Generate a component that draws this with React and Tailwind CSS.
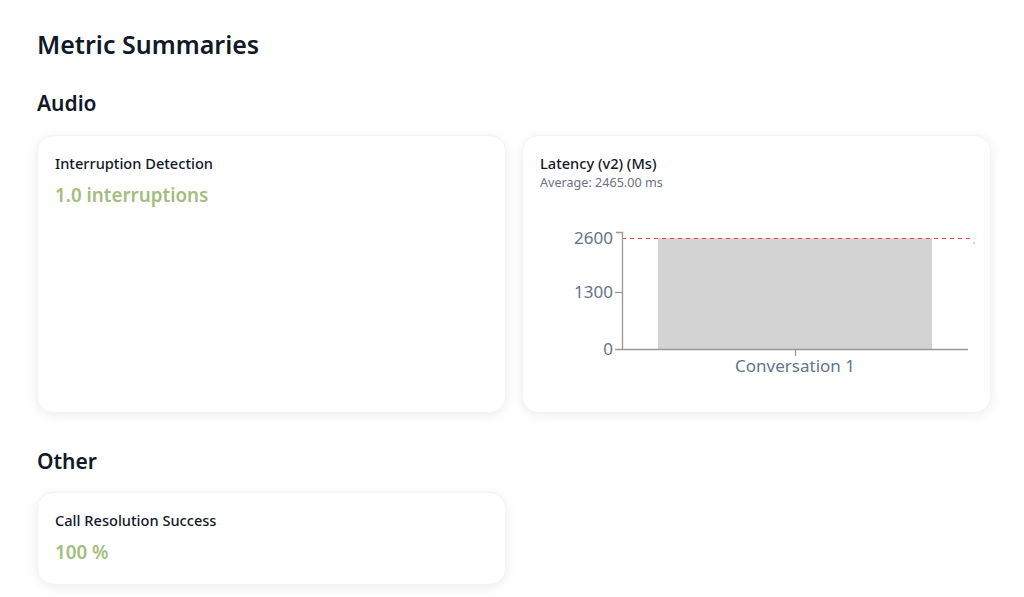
import React from 'react';

const font = { fontFamily: '"Noto Sans", "Open Sans", sans-serif' };

const Card = ({ className = '', children }) => (
    <div className={`rounded-2xl border border-gray-100 bg-white p-[17px] shadow-[0_2px_12px_rgba(0,0,0,0.08)] ${className}`}>
        {children}
    </div>
);

const LatencyChart = () => (
    <svg width="435" height="170" viewBox="0 0 435 170" className="block">
        {/* bar */}
        <rect x="118" y="19" width="274" height="111" fill="#d3d3d3" />
        {/* threshold line */}
        <line x1="82" y1="19.5" x2="431" y2="19.5" stroke="#ef4444" strokeWidth="1.2" strokeDasharray="4 4" />
        <rect x="433" y="23" width="2" height="2" fill="#f5d0a9" />
        {/* y axis */}
        <path d="M76,13.5H82.5V130.5" fill="none" stroke="#999" strokeWidth="1.3" />
        <line x1="75" y1="73.5" x2="82" y2="73.5" stroke="#999" strokeWidth="1.3" />
        <line x1="75" y1="130.5" x2="428" y2="130.5" stroke="#999" strokeWidth="1.5" />
        <line x1="255.5" y1="130" x2="255.5" y2="137" stroke="#999" strokeWidth="1.3" />
        <g fill="#64748b" fontSize="17" style={font} textAnchor="end">
            <text x="73" y="25">2600</text>
            <text x="73" y="79">1300</text>
            <text x="73" y="136">0</text>
        </g>
        <text x="255" y="153" fill="#64748b" fontSize="17" style={font} textAnchor="middle">Conversation 1</text>
    </svg>
);

export default function App() {
    return (
        <div style={font} className="min-h-screen bg-white pl-[37px] pr-[33px] pt-[28px] text-gray-900">
            <h1 className="text-[25px] font-semibold leading-8 text-[#111827]">Metric Summaries</h1>

            <h2 className="mt-[29px] text-[21px] font-semibold leading-7 text-[#111827]">Audio</h2>
            <div className="mt-[18px] grid grid-cols-2 gap-4">
                <Card className="h-[278px]">
                    <div className="text-[14.6px] font-medium leading-5 text-[#111827]">Interruption Detection</div>
                    <div className="mt-[8px] text-[18.8px] font-semibold leading-7 text-[#a3bd7f]">1.0 interruptions</div>
                </Card>
                <Card className="h-[278px]">
                    <div className="text-[14.6px] font-medium leading-5 text-[#111827]">Latency (v2) (Ms)</div>
                    <div className="mt-[2px] text-[12.6px] leading-4 text-gray-500">Average: 2465.00 ms</div>
                    <div className="mt-[28px]">
                        <LatencyChart />
                    </div>
                </Card>
            </div>

            <h2 className="mt-[34px] text-[21px] font-semibold leading-7 text-[#111827]">Other</h2>
            <div className="mt-[17px] grid grid-cols-2 gap-4">
                <Card className="h-[93px]">
                    <div className="text-[14.6px] font-medium leading-5 text-[#111827]">Call Resolution Success</div>
                    <div className="mt-[8px] text-[18.8px] font-semibold leading-7 text-[#a3bd7f]">100 %</div>
                </Card>
            </div>
        </div>
    );
}
